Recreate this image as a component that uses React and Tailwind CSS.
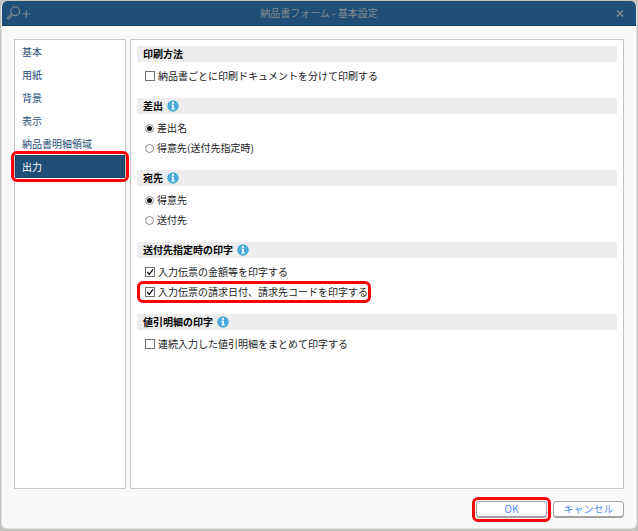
import React, { useState } from 'react';
import { clsx } from 'clsx';

const tabs = ['基本', '用紙', '背景', '表示', '納品書明細領域', '出力'];

function InfoIcon() {
  return (
    <svg viewBox="0 0 24 24" className="w-3 h-3" aria-hidden="true">
      <circle cx="12" cy="12" r="11.5" fill="#4aa9d8" />
      <circle cx="12" cy="6" r="2.3" fill="#fff" />
      <path d="M8.5 9.5h5.3v7.5h2v2.2h-7.3v-2.2h2v-5.3h-2z" fill="#fff" />
    </svg>
  );
}

function Highlight({ className }) {
  return (
    <span
      aria-hidden="true"
      className={clsx('absolute border-3 border-[#fb0007] rounded-md pointer-events-none', className)}
    />
  );
}

function Section({ title, info, children }) {
  return (
    <section className="pb-3">
      <h2 className="h-4 mb-1 px-1.5 flex items-center gap-1 bg-[#ededed] font-bold text-black">
        {title}
        {info && <InfoIcon />}
      </h2>
      {children}
    </section>
  );
}

function Check({ label, defaultChecked, highlighted }) {
  return (
    <div className="h-5 flex items-center">
      <label className="relative h-4 ml-2 flex items-center gap-[3px]">
        <span className="relative w-[10px] h-[10px]">
          <input
            type="checkbox"
            defaultChecked={defaultChecked}
            className="peer block appearance-none w-full h-full border border-[#707070] bg-white"
          />
          <svg
            viewBox="0 0 10 10"
            className="absolute inset-0 hidden peer-checked:block pointer-events-none"
            aria-hidden="true"
          >
            <path d="M2.2 4.8 4.2 7.4 8 2.4" fill="none" stroke="#111" strokeWidth="1.3" />
          </svg>
        </span>
        {label}
        {highlighted && <Highlight className="-inset-y-[3px] -left-2 -right-[3px]" />}
      </label>
    </div>
  );
}

function Radio({ label, name, defaultChecked }) {
  return (
    <div className="h-5 flex items-center">
      <label className="ml-2 flex items-center gap-[3px]">
        <span className="relative w-[9px] h-[9px]">
          <input
            type="radio"
            name={name}
            defaultChecked={defaultChecked}
            className="peer block appearance-none w-full h-full rounded-full border border-[#8a8a8a] bg-white"
          />
          <span className="absolute inset-0 m-auto w-[5px] h-[5px] rounded-full bg-[#111] hidden peer-checked:block pointer-events-none" />
        </span>
        {label}
      </label>
    </div>
  );
}

function DialogButton({ children }) {
  return (
    <button
      type="button"
      className="w-full h-[17px] flex items-center justify-center rounded-sm border border-b-2 border-[#a2a2a2] bg-white text-[10px] leading-none text-[#4d8df5]"
    >
      {children}
    </button>
  );
}

export default function App() {
  const [active, setActive] = useState('出力');

  return (
    <div className="min-h-screen flex flex-col p-px pb-0.5 bg-[#c2c2be] font-['Noto_Sans_CJK_JP',sans-serif] text-[10px] leading-4 text-[#222]">
      <div className="flex-1 flex flex-col rounded-md bg-[#f9f9f9] border border-t-0 border-[#e4e4e4] overflow-hidden">
        <header className="h-[25px] px-1 flex items-center justify-between bg-[#1f4e78] border-b border-[#183b5b] text-[#858b8d]">
          <button type="button" aria-label="検索" className="w-10 h-5 flex items-center">
            <svg viewBox="0 0 24 16" className="w-6 h-4" fill="none" stroke="currentColor" aria-hidden="true">
              <circle cx="9.2" cy="6.2" r="4.4" strokeWidth="1.1" />
              <path d="M5.6 9.8 2.4 13" strokeWidth="2.8" strokeLinecap="round" />
              <path d="M5.6 9.8 2.4 13" stroke="#1f4e78" strokeWidth="0.9" strokeLinecap="round" />
              <path d="M16.5 9h7.5M20.2 5.3v7.4" strokeWidth="1.2" />
            </svg>
          </button>
          <h1>納品書フォーム - 基本設定</h1>
          <button type="button" aria-label="閉じる" className="w-10 h-5 pr-2 flex items-center justify-end">
            <svg viewBox="0 0 8 8" className="w-2 h-2" stroke="currentColor" strokeWidth="1.5" aria-hidden="true">
              <path d="M1 1.5l6 6M7 1.5l-6 6" />
            </svg>
          </button>
        </header>

        <main className="flex-1 flex gap-1 px-3 pt-[13px]">
          <nav className="w-28 shrink-0 border border-[#c6c6c6] bg-white">
            <ul>
              {tabs.map((tab) => (
                <li key={tab} className="relative">
                  <button
                    type="button"
                    onClick={() => setActive(tab)}
                    className={clsx(
                      'w-full h-[23px] px-[7px] text-left',
                      active === tab
                        ? 'bg-[#1f4e78] text-white outline-1 -outline-offset-1 outline-dotted outline-[#12324f]'
                        : 'text-[#1f4e78]'
                    )}
                  >
                    {tab}
                  </button>
                  {active === tab && <Highlight className="-inset-x-1 -inset-y-1" />}
                </li>
              ))}
            </ul>
          </nav>

          <div className="flex-1 border border-[#c6c6c6] bg-white px-1.5 pt-1.5">
            <Section title="印刷方法">
              <Check label="納品書ごとに印刷ドキュメントを分けて印刷する" />
            </Section>
            <Section title="差出" info>
              <Radio name="sender" label="差出名" defaultChecked />
              <Radio name="sender" label="得意先(送付先指定時)" />
            </Section>
            <Section title="宛先" info>
              <Radio name="recipient" label="得意先" defaultChecked />
              <Radio name="recipient" label="送付先" />
            </Section>
            <Section title="送付先指定時の印字" info>
              <Check label="入力伝票の金額等を印字する" defaultChecked />
              <Check label="入力伝票の請求日付、請求先コードを印字する" defaultChecked highlighted />
            </Section>
            <Section title="値引明細の印字" info>
              <Check label="連続入力した値引明細をまとめて印字する" />
            </Section>
          </div>
        </main>

        <footer className="h-[39px] px-3 pt-3 flex justify-end gap-1.5">
          <div className="relative w-[71px] h-[17px]">
            <DialogButton>OK</DialogButton>
            <Highlight className="-inset-1" />
          </div>
          <div className="w-[71px] h-[17px]">
            <DialogButton>キャンセル</DialogButton>
          </div>
        </footer>
      </div>
    </div>
  );
}
